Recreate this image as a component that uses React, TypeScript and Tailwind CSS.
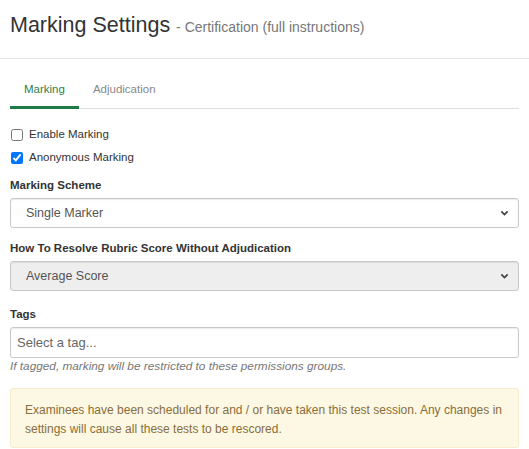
function Chevron() {
  return (
    <svg className="absolute right-[9px] top-1/2 -translate-y-1/2 h-[9px] w-[9px] text-[#444] pointer-events-none" viewBox="0 0 10 10">
      <path d="M1.5 3.2 L5 6.7 L8.5 3.2" fill="none" stroke="currentColor" strokeWidth="2" />
    </svg>
  );
}

function SelectBox({ value, disabled }: { value: string; disabled?: boolean }) {
  return (
    <div
      className={
        "relative h-[30px] w-full rounded-[3px] border border-[#c9c9c9] shadow-[inset_0_1px_1px_rgba(0,0,0,0.08)] flex items-center pl-[15px] text-[12.5px] text-[#555] " +
        (disabled ? "bg-[#eeeeee]" : "bg-white")
      }
    >
      {value}
      <Chevron />
    </div>
  );
}

export default function App() {
  return (
    <div className="w-[529px] h-[449px] bg-white overflow-hidden font-['Liberation_Sans',Arial,sans-serif] text-[#333]">
      <header className="h-[59px] border-b border-[#e5e5e5] flex items-center px-[10px] pb-[7px]">
        <h1 className="text-[21.5px] text-[#333] leading-none">
          Marking Settings <span className="text-[14px] text-[#777]">- Certification (full instructions)</span>
        </h1>
      </header>

      <div className="px-[10px]">
        <div className="mt-[13px] flex border-b border-[#ddd] text-[11.5px] leading-[18px]">
          <div className="px-[14px] pt-[8px] pb-[8px] text-[#2e8050] border-b-[3px] border-[#1e7b45] -mb-px">Marking</div>
          <div className="px-[14px] pt-[8px] pb-[8px] text-[#888]">Adjudication</div>
        </div>

        <div className="mt-[14px] flex flex-col text-[11.5px] leading-[23px] text-[#333]">
          <label className="flex items-center gap-[6px]">
            <input type="checkbox" className="h-[12px] w-[12px] m-0 ml-px" />
            Enable Marking
          </label>
          <label className="flex items-center gap-[6px]">
            <input type="checkbox" defaultChecked className="h-[12px] w-[12px] m-0 ml-px" />
            Anonymous Marking
          </label>
        </div>

        <div className="mt-[8px] text-[11.5px] leading-[16px] font-bold text-[#333]">Marking Scheme</div>
        <div className="mt-[5px]">
          <SelectBox value="Single Marker" />
        </div>

        <div className="mt-[12px] text-[11.5px] leading-[16px] font-bold text-[#333]">How To Resolve Rubric Score Without Adjudication</div>
        <div className="mt-[5px]">
          <SelectBox value="Average Score" disabled />
        </div>

        <div className="mt-[15px] text-[11.5px] leading-[16px] font-bold text-[#333]">Tags</div>
        <div className="mt-[5px] h-[31px] w-full rounded-[3px] border border-[#c9c9c9] shadow-[inset_0_1px_1px_rgba(0,0,0,0.08)] flex items-center pl-[6px] text-[13px] text-[#666]">
          Select a tag...
        </div>
        <div className="mt-[1px] text-[11.8px] leading-[14px] italic text-[#777]">
          If tagged, marking will be restricted to these permissions groups.
        </div>

        <div className="mt-[15px] rounded-[3px] border border-[#faebcc] bg-[#fcf8e3] px-[14px] pt-[12px] pb-[8px] text-[12px] leading-[19px] text-[#8a6d3b]">
          Examinees have been scheduled for and / or have taken this test session. Any changes in settings will cause all these tests to be rescored.
        </div>
      </div>
    </div>
  );
}
